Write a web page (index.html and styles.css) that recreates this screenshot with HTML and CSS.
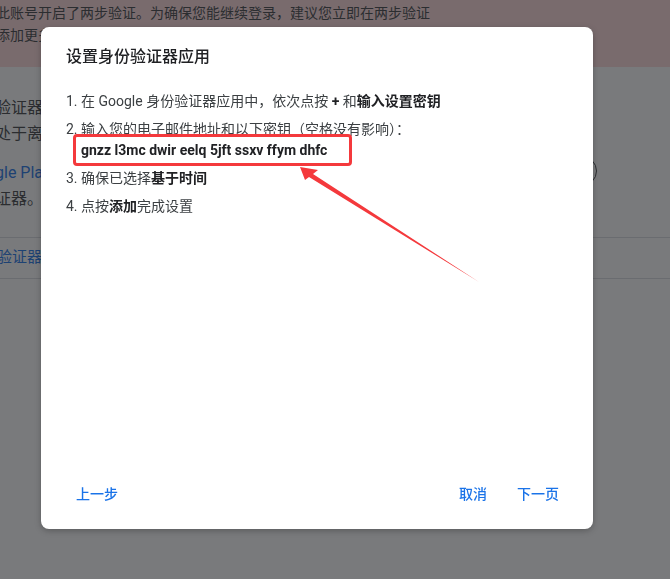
FILE: index.html
```html
<html>

<head>
  <meta name="viewport" content="width=device-width, initial-scale=1">
  <link rel="stylesheet" href="styles.css">
</head>

<body>
  <div class="banner">
    <div class="banner-text">
      <div>此账号开启了两步验证。为确保您能继续登录，建议您立即在两步验证</div>
      <div>添加更多备用验证方式。</div>
    </div>
  </div>

  <div class="page">
    <div class="page-text">
      <div>验证器应用生成验证码，即使您的手机</div>
      <div>处于离线状态也可以使用。</div>
      <div class="gap link">gle Play 商店下载 Google 身份验证器</div>
      <div>证器。</div>
    </div>
    <div class="pill"></div>
    <div class="rule"></div>
    <div class="page-link">验证器应用</div>
    <div class="rule"></div>
  </div>

  <div class="overlay"></div>

  <div class="dialog">
    <div class="dialog-title">设置身份验证器应用</div>
    <ol class="steps">
      <li>1. 在 Google 身份验证器应用中，依次点按 <b>+</b> 和<b>输入设置密钥</b></li>
      <li>2. 输入您的电子邮件地址和以下密钥（空格没有影响）：
        <div class="key"><span class="key-text">gnzz l3mc dwir eelq 5jft ssxv ffym dhfc</span></div>
      </li>
      <li>3. 确保已选择<b>基于时间</b></li>
      <li>4. 点按<b>添加</b>完成设置</li>
    </ol>
    <div class="dialog-actions">
      <button class="text-btn">上一步</button>
      <div class="spacer"></div>
      <button class="text-btn">取消</button>
      <button class="text-btn">下一页</button>
    </div>
  </div>

  <svg class="arrow" width="670" height="579" viewBox="0 0 670 579">
    <polygon points="300,167 318,170 313,174 479,282 309,177 305,180" fill="#f4393c" />
  </svg>
</body>

</html>
```

FILE: styles.css
```css
body {
  margin: 0;
  font-family: Roboto, "Noto Sans CJK SC", sans-serif;
  background-color: white;
  color: #3c4043;
  overflow: hidden;
  width: 670px;
  height: 579px;
}

.banner {
  background-color: #fedada;
  height: 67px;
  font-size: 14px;
  line-height: 22px;
  padding-top: 2px;
  box-sizing: border-box;
  overflow: hidden;
}

.banner-text {
  margin-left: -4px;
  white-space: nowrap;
}

.page {
  position: relative;
  padding-top: 28px;
  font-size: 16px;
  line-height: 26px;
  overflow: hidden;
}

.page-text {
  margin-left: -5px;
  white-space: nowrap;
}

.gap {
  margin-top: 13px;
}

.link,
.page-link {
  color: #1a73e8;
}

.pill {
  position: absolute;
  right: 73px;
  top: 89px;
  width: 120px;
  height: 28px;
  border: 1px solid #3c4043;
  border-radius: 15px;
}

.rule {
  border-top: 1px solid #dadce0;
  margin: 25px 0 0 0;
  width: 100%;
}

.rule + .page-link + .rule {
  margin-top: 8px;
}

.page-link {
  margin-left: -3px;
  font-size: 15px;
  line-height: 26px;
  margin-top: 6px;
}

.overlay {
  position: fixed;
  inset: 0;
  background-color: rgba(32, 33, 36, 0.6);
}

.dialog {
  position: fixed;
  left: 41px;
  top: 27px;
  width: 552px;
  height: 502px;
  background: white;
  border-radius: 8px;
  box-shadow: 0 2px 6px rgba(0, 0, 0, 0.25);
  display: flex;
  flex-direction: column;
  color: #202124;
}

.dialog-title {
  font-size: 16px;
  font-weight: 500;
  line-height: 24px;
  padding: 18px 24px 0 25px;
}

.steps {
  list-style: none;
  margin: 22px 0 0 0;
  padding: 0 24px 0 25px;
  font-size: 14px;
  line-height: 20px;
  color: #3c4043;
}

.steps li {
  margin-bottom: 8px;
}

.steps b {
  color: #202124;
}

.key {
  margin: 1px 0 -1px 15px;
  line-height: 21px;
  font-weight: bold;
  color: #202124;
}

.key-text {
  position: relative;
}

.key-text::after {
  content: "";
  position: absolute;
  left: -8px;
  right: -25px;
  top: -8px;
  bottom: -8px;
  border: 3px solid #f4393c;
  border-radius: 4px;
}

.dialog-actions {
  margin-top: auto;
  display: flex;
  gap: 10px;
  padding: 0 24px 26px 25px;
}

.spacer {
  flex: 1;
}

.text-btn {
  background: none;
  border: none;
  font-family: Roboto, "Noto Sans CJK SC", sans-serif;
  font-size: 14px;
  font-weight: 500;
  color: #1a73e8;
  padding: 0 10px;
  height: 18px;
  line-height: 18px;
}

.arrow {
  position: fixed;
  left: 0;
  top: 0;
  pointer-events: none;
}
```
